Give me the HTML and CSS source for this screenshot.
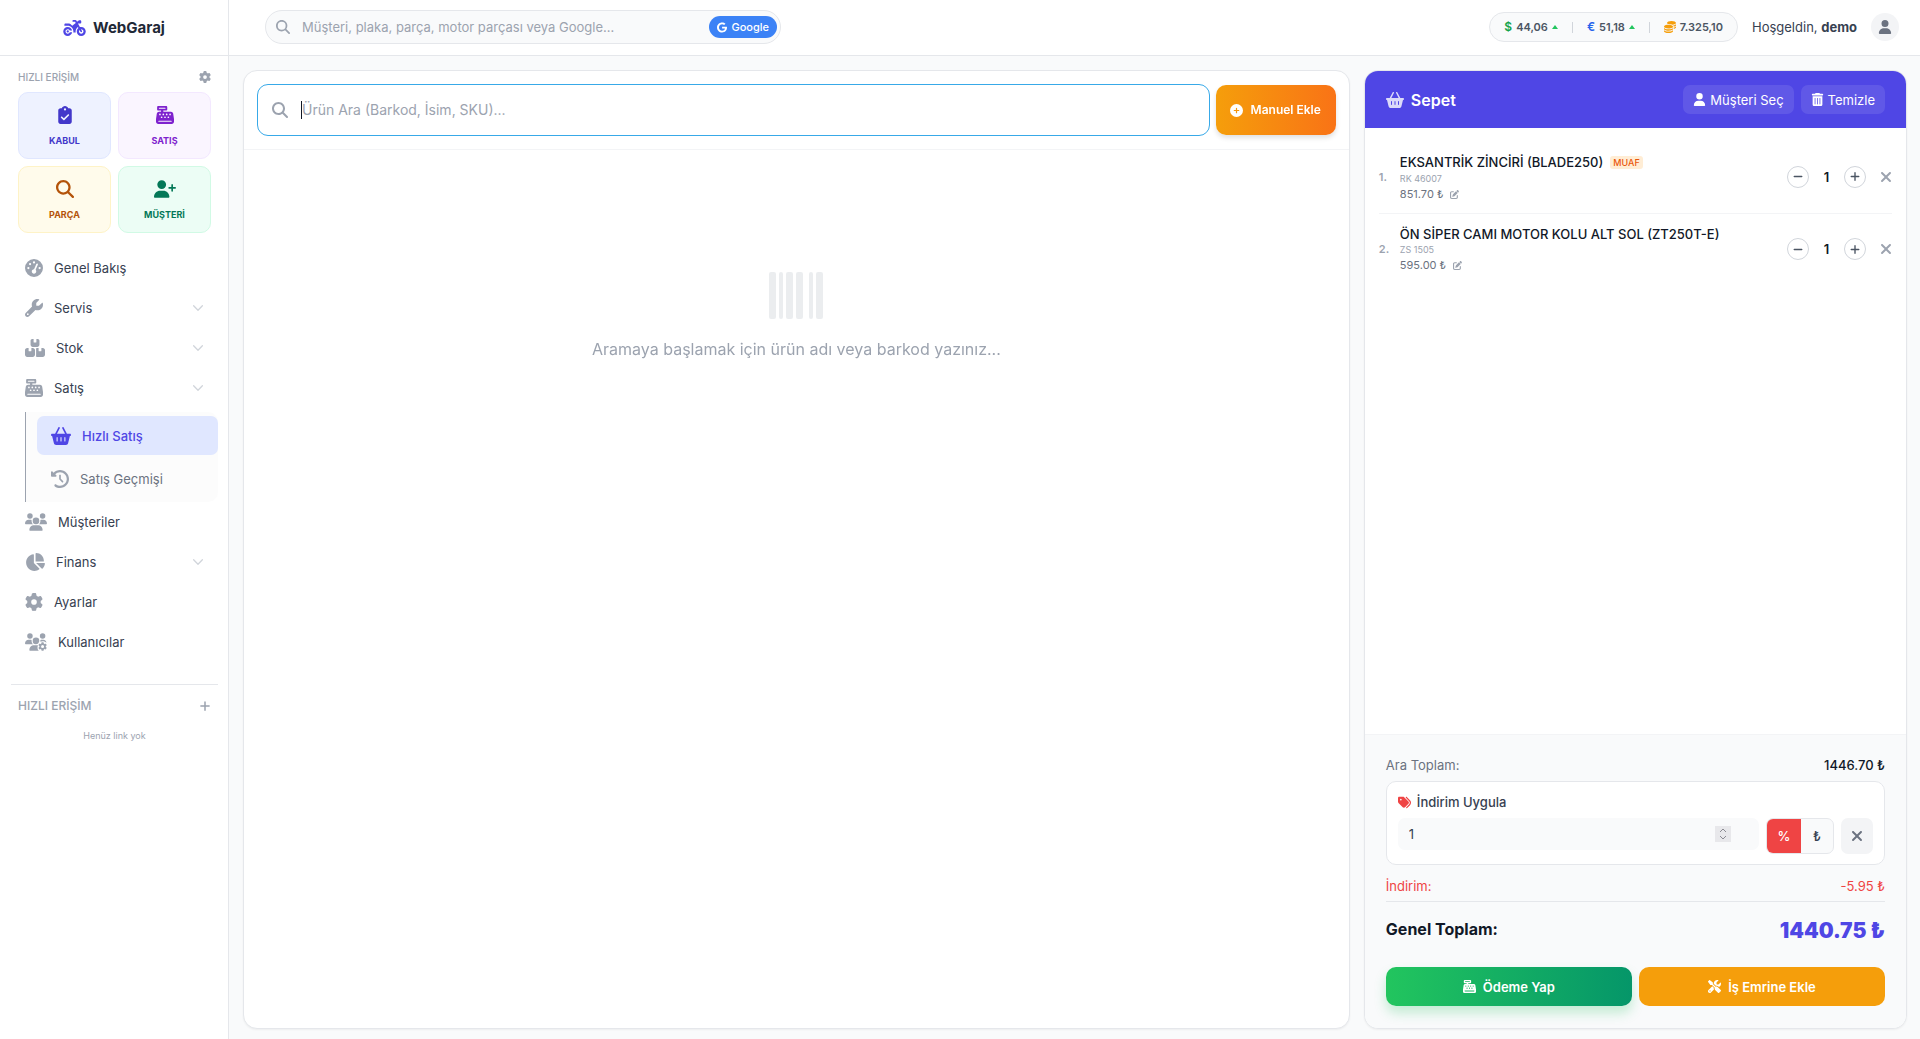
FILE: index.html
```html
<!DOCTYPE html>
<html lang="tr">
<head>
    <meta charset="UTF-8">
    <meta name="viewport" content="width=device-width, initial-scale=1.0">
    <title>WebGaraj - Hızlı Satış</title>
    <link rel="stylesheet" href="styles.css">
</head>
<body>
    <!-- İkonlar -->
    <svg class="sprite" aria-hidden="true">
        <symbol id="i-search" viewBox="0 0 512 512"><path d="M416 208c0 45.9-14.9 88.3-40 122.7L502.6 457.4c12.5 12.5 12.5 32.8 0 45.3s-32.8 12.5-45.3 0L330.7 376c-34.4 25.2-76.8 40-122.7 40C93.1 416 0 322.9 0 208S93.1 0 208 0S416 93.1 416 208zM208 352a144 144 0 1 0 0-288 144 144 0 1 0 0 288z"/></symbol>
        <symbol id="i-gear" viewBox="0 0 512 512"><path d="M495.9 166.6c3.2 8.7 .5 18.4-6.4 24.6l-43.3 39.4c1.1 8.3 1.7 16.8 1.7 25.4s-.6 17.1-1.7 25.4l43.3 39.4c6.9 6.2 9.6 15.9 6.4 24.6c-4.4 11.9-9.7 23.3-15.8 34.3l-4.7 8.1c-6.6 11-14 21.4-22.1 31.2c-5.9 7.2-15.7 9.6-24.5 6.8l-55.7-17.7c-13.4 10.3-28.2 18.9-44 25.4l-12.5 57.1c-2 9.1-9 16.3-18.2 17.8c-13.8 2.3-28 3.5-42.5 3.5s-28.7-1.2-42.5-3.5c-9.2-1.5-16.2-8.7-18.2-17.8l-12.5-57.1c-15.8-6.5-30.6-15.1-44-25.4L83.1 425.9c-8.8 2.8-18.6 .3-24.5-6.8c-8.1-9.8-15.5-20.2-22.1-31.2l-4.7-8.1c-6.1-11-11.4-22.4-15.8-34.3c-3.2-8.7-.5-18.4 6.4-24.6l43.3-39.4C64.6 273.1 64 264.6 64 256s.6-17.1 1.7-25.4L22.4 191.2c-6.9-6.2-9.6-15.9-6.4-24.6c4.4-11.9 9.7-23.3 15.8-34.3l4.7-8.1c6.6-11 14-21.4 22.1-31.2c5.9-7.2 15.7-9.6 24.5-6.8l55.7 17.7c13.4-10.3 28.2-18.9 44-25.4l12.5-57.1c2-9.1 9-16.3 18.2-17.8C227.3 1.2 241.5 0 256 0s28.7 1.2 42.5 3.5c9.2 1.5 16.2 8.7 18.2 17.8l12.5 57.1c15.8 6.5 30.6 15.1 44 25.4l55.7-17.7c8.8-2.8 18.6-.3 24.5 6.8c8.1 9.8 15.5 20.2 22.1 31.2l4.7 8.1c6.1 11 11.4 22.4 15.8 34.3zM256 336a80 80 0 1 0 0-160 80 80 0 1 0 0 160z"/></symbol>
        <symbol id="i-user" viewBox="0 0 448 512"><path d="M224 256A128 128 0 1 0 224 0a128 128 0 1 0 0 256zm-45.7 48C79.8 304 0 383.8 0 482.3C0 498.7 13.3 512 29.7 512H418.3c16.4 0 29.7-13.3 29.7-29.7C448 383.8 368.2 304 269.7 304H178.3z"/></symbol>
        <symbol id="i-user-plus" viewBox="0 0 640 512"><path d="M96 128a128 128 0 1 1 256 0A128 128 0 1 1 96 128zM0 482.3C0 383.8 79.8 304 178.3 304h91.4C368.2 304 448 383.8 448 482.3c0 16.4-13.3 29.7-29.7 29.7H29.7C13.3 512 0 498.7 0 482.3zM504 312V248H440c-13.3 0-24-10.7-24-24s10.7-24 24-24h64V136c0-13.3 10.7-24 24-24s24 10.7 24 24v64h64c13.3 0 24 10.7 24 24s-10.7 24-24 24H552v64c0 13.3-10.7 24-24 24s-24-10.7-24-24z"/></symbol>
        <symbol id="i-wrench" viewBox="0 0 512 512"><path d="M352 320c88.4 0 160-71.6 160-160c0-15.3-2.2-30.1-6.2-44.2c-3.1-10.8-16.4-13.2-24.3-5.3l-76.8 76.8c-3 3-7.1 4.7-11.3 4.7H336c-8.8 0-16-7.2-16-16V118.6c0-4.2 1.7-8.3 4.7-11.3l76.8-76.8c7.9-7.9 5.4-21.2-5.3-24.3C382.1 2.2 367.3 0 352 0C263.6 0 192 71.6 192 160c0 19.1 3.4 37.5 9.5 54.5L19.9 396.1C7.2 408.8 0 426.1 0 444.1C0 481.6 30.4 512 67.9 512c18 0 35.3-7.2 48-19.9L297.5 310.5c17 6.2 35.4 9.5 54.5 9.5zM80 408a24 24 0 1 1 0 48 24 24 0 1 1 0-48z"/></symbol>
        <symbol id="i-gauge" viewBox="0 0 512 512"><path d="M0 256a256 256 0 1 1 512 0A256 256 0 1 1 0 256zM288 96a32 32 0 1 0 -64 0 32 32 0 1 0 64 0zM256 416c35.3 0 64-28.7 64-64c0-17.4-6.9-33.1-18.1-44.6L366 161.7c5.3-12.1-.2-26.3-12.3-31.6s-26.3 .2-31.6 12.3L257.9 288c-.6 0-1.3 0-1.9 0c-35.3 0-64 28.7-64 64s28.7 64 64 64zM176 144a32 32 0 1 0 -64 0 32 32 0 1 0 64 0zM96 288a32 32 0 1 0 0-64 32 32 0 1 0 0 64zm352-32a32 32 0 1 0 -64 0 32 32 0 1 0 64 0z"/></symbol>
        <symbol id="i-boxes" viewBox="0 0 576 512"><path d="M248 0H208c-26.5 0-48 21.5-48 48V160c0 35.3 28.7 64 64 64H352c35.3 0 64-28.7 64-64V48c0-26.5-21.5-48-48-48H328V80c0 8.8-7.2 16-16 16H264c-8.8 0-16-7.2-16-16V0zM64 256c-35.3 0-64 28.7-64 64V448c0 35.3 28.7 64 64 64H224c35.3 0 64-28.7 64-64V320c0-35.3-28.7-64-64-64H184v80c0 8.8-7.2 16-16 16H120c-8.8 0-16-7.2-16-16V256H64zM352 512H512c35.3 0 64-28.7 64-64V320c0-35.3-28.7-64-64-64H472v80c0 8.8-7.2 16-16 16H408c-8.8 0-16-7.2-16-16V256H352c-15 0-28.8 5.1-39.7 13.8c4.9 10.4 7.7 22 7.7 34.2V464c0 12.2-2.8 23.8-7.7 34.2C323.2 506.9 337 512 352 512z"/></symbol>
        <symbol id="i-register" viewBox="0 0 512 512"><path d="M64 0C46.3 0 32 14.3 32 32V96c0 17.7 14.3 32 32 32h80v32H87c-31.6 0-58.5 23.1-63.3 54.4L1.1 364.1C.4 368.8 0 373.6 0 378.4V448c0 35.3 28.7 64 64 64H448c35.3 0 64-28.7 64-64V378.4c0-4.8-.4-9.6-1.1-14.4L488.2 214.4C483.5 183.1 456.6 160 425 160H208V128h80c17.7 0 32-14.3 32-32V32c0-17.7-14.3-32-32-32H64zM96 48H256c8.8 0 16 7.2 16 16s-7.2 16-16 16H96c-8.8 0-16-7.2-16-16s7.2-16 16-16zM64 432c0-8.8 7.2-16 16-16H432c8.8 0 16 7.2 16 16s-7.2 16-16 16H80c-8.8 0-16-7.2-16-16zm48-168a24 24 0 1 1 0-48 24 24 0 1 1 0 48zm120-24a24 24 0 1 1 -48 0 24 24 0 1 1 48 0zM160 344a24 24 0 1 1 0-48 24 24 0 1 1 0 48zM328 240a24 24 0 1 1 -48 0 24 24 0 1 1 48 0zM256 344a24 24 0 1 1 0-48 24 24 0 1 1 0 48zM424 240a24 24 0 1 1 -48 0 24 24 0 1 1 48 0zM352 344a24 24 0 1 1 0-48 24 24 0 1 1 0 48z"/></symbol>
        <symbol id="i-basket" viewBox="0 0 576 512"><path d="M253.3 35.1c6.1-11.8 1.5-26.3-10.2-32.4s-26.3-1.5-32.4 10.2L117.6 192H32c-17.7 0-32 14.3-32 32s14.3 32 32 32L83.9 463.5C91 492 116.6 512 146 512H430c29.4 0 55-20 62.1-48.5L544 256c17.7 0 32-14.3 32-32s-14.3-32-32-32H458.4L365.3 12.9C359.2 1.2 344.7-3.4 332.9 2.7s-16.3 20.6-10.2 32.4L404.3 192H171.7L253.3 35.1zM192 304v96c0 8.8-7.2 16-16 16s-16-7.2-16-16V304c0-8.8 7.2-16 16-16s16 7.2 16 16zm96-16c8.8 0 16 7.2 16 16v96c0 8.8-7.2 16-16 16s-16-7.2-16-16V304c0-8.8 7.2-16 16-16zm128 16v96c0 8.8-7.2 16-16 16s-16-7.2-16-16V304c0-8.8 7.2-16 16-16s16 7.2 16 16z"/></symbol>
        <symbol id="i-history" viewBox="0 0 512 512"><path d="M75 75L41 41C25.9 25.9 0 36.6 0 57.9V168c0 13.3 10.7 24 24 24H134.1c21.4 0 32.1-25.9 17-41l-30.8-30.8C155 85.5 203 64 256 64c106 0 192 86 192 192s-86 192-192 192c-40.8 0-78.6-12.7-109.7-34.4c-14.5-10.1-34.4-6.6-44.6 7.9s-6.6 34.4 7.9 44.6C151.2 495 201.7 512 256 512c141.4 0 256-114.6 256-256S397.4 0 256 0C185.3 0 121.3 28.7 75 75zm181 53c-13.3 0-24 10.7-24 24V256c0 6.4 2.5 12.5 7 17l72 72c9.4 9.4 24.6 9.4 33.9 0s9.4-24.6 0-33.9l-65-65V152c0-13.3-10.7-24-24-24z"/></symbol>
        <symbol id="i-users" viewBox="0 0 640 512"><path d="M144 0a80 80 0 1 1 0 160A80 80 0 1 1 144 0zM512 0a80 80 0 1 1 0 160A80 80 0 1 1 512 0zM0 298.7C0 239.8 47.8 192 106.7 192h42.7c15.9 0 31 3.5 44.6 9.7c-1.3 7.2-1.9 14.7-1.9 22.3c0 38.2 16.8 72.5 43.3 96c-.2 0-.4 0-.7 0H21.3C9.6 320 0 310.4 0 298.7zM405.3 320c-.2 0-.4 0-.7 0c26.6-23.5 43.3-57.8 43.3-96c0-7.6-.7-15-1.9-22.3c13.6-6.3 28.7-9.7 44.6-9.7h42.7C592.2 192 640 239.8 640 298.7c0 11.8-9.6 21.3-21.3 21.3H405.3zM224 224a96 96 0 1 1 192 0 96 96 0 1 1 -192 0zM128 485.3C128 411.7 187.7 352 261.3 352H378.7C452.3 352 512 411.7 512 485.3c0 14.7-11.9 26.7-26.7 26.7H154.7c-14.7 0-26.7-11.9-26.7-26.7z"/></symbol>
        <symbol id="i-users-gear" viewBox="0 0 640 512">
            <path d="M144 160A80 80 0 1 0 144 0a80 80 0 1 0 0 160zM512 160A80 80 0 1 0 512 0a80 80 0 1 0 0 160zM0 298.7C0 310.4 9.6 320 21.3 320H234.7c.2 0 .4 0 .7 0c-26.6-23.5-43.3-57.8-43.3-96c0-7.6 .7-15 1.9-22.3c-13.6-6.3-28.7-9.7-44.6-9.7H106.7C47.8 192 0 239.8 0 298.7zM320 320c24 0 45.9-8.8 62.7-23.3c2.5-3.7 5.2-7.3 8-10.7c16-18.7 22-40 25.3-62A96 96 0 1 0 320 320zM261.3 352C187.7 352 128 411.7 128 485.3c0 14.7 11.9 26.7 26.7 26.7H400c-22-25-36-52-36-88c0-26 4-48 14-72H261.3zM446 201.7c1.2 7.3 2 14.7 2 22.3c0 10-1 19-3 28c20-12 44-20 69-20c46 0 84 18 112 46C616 228 578 192 533.3 192H490.7c-16 0-31 3.5-44.7 9.7z"/>
            <g transform="translate(386 262) scale(.49)"><path d="M495.9 166.6c3.2 8.7 .5 18.4-6.4 24.6l-43.3 39.4c1.1 8.3 1.7 16.8 1.7 25.4s-.6 17.1-1.7 25.4l43.3 39.4c6.9 6.2 9.6 15.9 6.4 24.6c-4.4 11.9-9.7 23.3-15.8 34.3l-4.7 8.1c-6.6 11-14 21.4-22.1 31.2c-5.9 7.2-15.7 9.6-24.5 6.8l-55.7-17.7c-13.4 10.3-28.2 18.9-44 25.4l-12.5 57.1c-2 9.1-9 16.3-18.2 17.8c-13.8 2.3-28 3.5-42.5 3.5s-28.7-1.2-42.5-3.5c-9.2-1.5-16.2-8.7-18.2-17.8l-12.5-57.1c-15.8-6.5-30.6-15.1-44-25.4L83.1 425.9c-8.8 2.8-18.6 .3-24.5-6.8c-8.1-9.8-15.5-20.2-22.1-31.2l-4.7-8.1c-6.1-11-11.4-22.4-15.8-34.3c-3.2-8.7-.5-18.4 6.4-24.6l43.3-39.4C64.6 273.1 64 264.6 64 256s.6-17.1 1.7-25.4L22.4 191.2c-6.9-6.2-9.6-15.9-6.4-24.6c4.4-11.9 9.7-23.3 15.8-34.3l4.7-8.1c6.6-11 14-21.4 22.1-31.2c5.9-7.2 15.7-9.6 24.5-6.8l55.7 17.7c13.4-10.3 28.2-18.9 44-25.4l12.5-57.1c2-9.1 9-16.3 18.2-17.8C227.3 1.2 241.5 0 256 0s28.7 1.2 42.5 3.5c9.2 1.5 16.2 8.7 18.2 17.8l12.5 57.1c15.8 6.5 30.6 15.1 44 25.4l55.7-17.7c8.8-2.8 18.6-.3 24.5 6.8c8.1 9.8 15.5 20.2 22.1 31.2l4.7 8.1c6.1 11 11.4 22.4 15.8 34.3zM256 346a90 90 0 1 0 0-180 90 90 0 1 0 0 180z"/></g>
        </symbol>
        <symbol id="i-pie" viewBox="0 0 576 512"><path d="M304 240V16.6c0-9 7-16.6 16-16.6C443.7 0 544 100.3 544 224c0 9-7.6 16-16.6 16H304zM32 272C32 150.7 122.1 50.3 239 34.3c9.2-1.3 17 6.1 17 15.4V288L412.5 444.5c6.7 6.7 6.2 17.7-1.5 23.1C371.8 495.6 323.8 512 272 512C139.5 512 32 404.6 32 272zm526.4 16c9.3 0 16.6 7.8 15.4 17c-7.7 55.9-34.6 105.6-73.9 142.3c-6 5.6-15.4 5.2-21.2-.7L320 288H558.4z"/></symbol>
        <symbol id="i-tags" viewBox="0 0 512 512"><path d="M345 39.1L472.8 168.4c52.4 53 52.4 138.2 0 191.2L360.8 472.9c-9.3 9.4-24.5 9.5-33.9 .2s-9.5-24.5-.2-33.9L438.6 325.9c33.9-34.3 33.9-89.4 0-123.7L310.9 72.9c-9.3-9.4-9.2-24.6 .2-33.9s24.6-9.2 33.9 .2zM0 229.5V80C0 53.5 21.5 32 48 32H197.5c17 0 33.3 6.7 45.3 18.7l168 168c25 25 25 65.5 0 90.5L277.3 442.7c-25 25-65.5 25-90.5 0l-168-168C6.7 262.7 0 246.5 0 229.5zM144 144a32 32 0 1 0 -64 0 32 32 0 1 0 64 0z"/></symbol>
        <symbol id="i-trash" viewBox="0 0 448 512"><path d="M135.2 17.7C140.6 6.8 151.7 0 163.8 0H284.2c12.1 0 23.2 6.8 28.6 17.7L320 32h96c17.7 0 32 14.3 32 32s-14.3 32-32 32H32C14.3 96 0 81.7 0 64S14.3 32 32 32h96l7.2-14.3zM32 128H416V448c0 35.3-28.7 64-64 64H96c-35.3 0-64-28.7-64-64V128zm96 64c-8.8 0-16 7.2-16 16V432c0 8.8 7.2 16 16 16s16-7.2 16-16V208c0-8.8-7.2-16-16-16zm96 0c-8.8 0-16 7.2-16 16V432c0 8.8 7.2 16 16 16s16-7.2 16-16V208c0-8.8-7.2-16-16-16zm96 0c-8.8 0-16 7.2-16 16V432c0 8.8 7.2 16 16 16s16-7.2 16-16V208c0-8.8-7.2-16-16-16z"/></symbol>
        <symbol id="i-circle-plus" viewBox="0 0 512 512"><path d="M256 512A256 256 0 1 0 256 0a256 256 0 1 0 0 512zM232 344V280H168c-13.3 0-24-10.7-24-24s10.7-24 24-24h64V168c0-13.3 10.7-24 24-24s24 10.7 24 24v64h64c13.3 0 24 10.7 24 24s-10.7 24-24 24H280v64c0 13.3-10.7 24-24 24s-24-10.7-24-24z"/></symbol>
        <symbol id="i-xmark" viewBox="0 0 384 512"><path d="M342.6 150.6c12.5-12.5 12.5-32.8 0-45.3s-32.8-12.5-45.3 0L192 210.7 86.6 105.4c-12.5-12.5-32.8-12.5-45.3 0s-12.5 32.8 0 45.3L146.7 256 41.4 361.4c-12.5 12.5-12.5 32.8 0 45.3s32.8 12.5 45.3 0L192 301.3 297.4 406.6c12.5 12.5 32.8 12.5 45.3 0s12.5-32.8 0-45.3L237.3 256 342.6 150.6z"/></symbol>
        <symbol id="i-plus" viewBox="0 0 448 512"><path d="M256 80c0-17.7-14.3-32-32-32s-32 14.3-32 32V224H48c-17.7 0-32 14.3-32 32s14.3 32 32 32H192V432c0 17.7 14.3 32 32 32s32-14.3 32-32V288H400c17.7 0 32-14.3 32-32s-14.3-32-32-32H256V80z"/></symbol>
        <symbol id="i-minus" viewBox="0 0 448 512"><path d="M432 256c0 17.7-14.3 32-32 32H48c-17.7 0-32-14.3-32-32s14.3-32 32-32H400c17.7 0 32 14.3 32 32z"/></symbol>
        <symbol id="i-chevron" viewBox="0 0 16 16"><path d="M3 5.5l5 5 5-5" fill="none" stroke="currentColor" stroke-width="1.5" stroke-linecap="round" stroke-linejoin="round"/></symbol>
        <symbol id="i-google" viewBox="0 0 488 512"><path d="M488 261.8C488 403.3 391.1 504 248 504 110.8 504 0 393.2 0 256S110.8 8 248 8c66.8 0 123 24.5 166.3 64.9l-67.5 64.9C258.5 52.6 94.3 116.6 94.3 256c0 86.5 69.1 156.6 153.7 156.6 98.2 0 135-70.4 140.8-106.9H248v-85.3h236.1c2.3 12.7 3.9 24.9 3.9 41.4z"/></symbol>
        <symbol id="i-moto" viewBox="0 0 640 512"><path d="M280 32c-13.3 0-24 10.7-24 24s10.7 24 24 24h57.7l16.4 30.3L256 192l-45.3-45.3c-12-12-28.3-18.7-45.3-18.7H64c-17.7 0-32 14.3-32 32v32h96c88.4 0 160 71.6 160 160c0 11-1.1 21.7-3.2 32h70.4c-2.1-10.3-3.2-21-3.2-32c0-52.2 25-98.6 63.7-127.8l15.4 28.6C402.4 276.3 384 312 384 352c0 70.7 57.3 128 128 128s128-57.3 128-128s-57.3-128-128-128c-13.5 0-26.5 2.1-38.7 6L418.2 128H480c17.7 0 32-14.3 32-32V64c0-17.7-14.3-32-32-32H459.6c-7.5 0-14.7 2.6-20.5 7.4L391.7 78.9l-14-26c-7-12.9-20.5-21-35.2-21H280zM462.7 311.2l28.2 52.2c6.3 11.7 20.9 16 32.5 9.7s16-20.9 9.7-32.5l-28.2-52.2c2.3-.3 4.7-.4 7.1-.4c35.3 0 64 28.7 64 64s-28.7 64-64 64s-64-28.7-64-64c0-15.5 5.5-29.7 14.7-40.8zM187.3 376c-9.5 23.5-32.5 40-59.3 40c-35.3 0-64-28.7-64-64s28.7-64 64-64c26.9 0 49.9 16.5 59.3 40h66.4C242.5 268.8 190.5 224 128 224C57.3 224 0 281.3 0 352s57.3 128 128 128c62.5 0 114.5-44.8 125.8-104H187.3zM128 384a32 32 0 1 0 0-64 32 32 0 1 0 0 64z"/></symbol>
        <symbol id="i-coins" viewBox="0 0 512 512"><path d="M512 80c0 18-14.3 34.6-38.4 48c-29.1 16.1-72.5 27.5-122.3 30.9c-3.7-1.8-7.4-3.5-11.3-5C300.6 137.4 248.2 128 192 128c-8.3 0-16.4 .2-24.5 .6l-1.1-.6C142.3 114.6 128 98 128 80c0-44.2 86-80 192-80S512 35.8 512 80zM160.7 161.1c10.2-.7 20.7-1.1 31.3-1.1c62.2 0 117.4 12.3 152.5 31.4C369.3 204.9 384 221.7 384 240c0 4-.7 7.9-2.1 11.7c-4.6 13.2-17 25.3-35 35.5c-.1 .1-.3 .1-.4 .2c-.3 .2-.6 .3-.9 .5c-35 19.4-90.8 32-153.6 32c-59.6 0-112.9-11.3-148.2-29.1c-1.9-.9-3.7-1.9-5.5-2.9C14.3 274.6 0 258 0 240c0-34.8 53.4-64.5 128-75.4c10.5-1.5 21.4-2.7 32.7-3.5zM416 240c0-21.9-10.6-39.9-24.1-53.4c28.3-4.4 54.2-11.4 76.2-20.5c16.3-6.8 31.5-15.2 43.9-25.5V176c0 19.3-16.5 37.1-43.8 50.9c-14.6 7.4-32.4 13.7-52.4 18.5c.1-1.8 .2-3.5 .2-5.3zm-32 96c0 18-14.3 34.6-38.4 48c-1.8 1-3.6 1.9-5.5 2.9C304.9 404.7 251.6 416 192 416c-62.8 0-118.6-12.6-153.6-32C14.3 370.6 0 354 0 336V300.6c12.5 10.3 27.6 18.7 43.9 25.5C83.4 342.6 135.8 352 192 352s108.6-9.4 148.1-25.9c7.8-3.2 15.3-6.9 22.4-10.9c6.1-3.4 11.8-7.2 17.2-11.2c1.5-1.1 2.9-2.3 4.3-3.4V336zm32 0V278.1c19-4.2 36.5-9.5 52.1-16c16.3-6.8 31.5-15.2 43.9-25.5V272c0 10.5-5 21-14.9 30.9c-16.3 16.3-45 29.7-81.3 38.4c.1-1.7 .2-3.5 .2-5.3zM192 448c56.2 0 108.6-9.4 148.1-25.9c16.3-6.8 31.5-15.2 43.9-25.5V432c0 44.2-86 80-192 80S0 476.2 0 432V396.6c12.5 10.3 27.6 18.7 43.9 25.5C83.4 438.6 135.8 448 192 448z"/></symbol>
        <symbol id="i-tools" viewBox="0 0 512 512"><path d="M78.6 5C69.1-2.4 55.6-1.5 47 7L7 47c-8.5 8.5-9.4 22-2.1 31.6l80 104c4.5 5.9 11.6 9.4 19 9.4h54.1l109 109c-14.7 29-10 65.4 14.3 89.6l112 112c12.5 12.5 32.8 12.5 45.3 0l64-64c12.5-12.5 12.5-32.8 0-45.3l-112-112c-24.2-24.2-60.6-29-89.6-14.3l-109-109V104c0-7.5-3.5-14.5-9.4-19L78.6 5zM19.9 396.1C7.2 408.8 0 426.1 0 444.1C0 481.6 30.4 512 67.9 512c18 0 35.3-7.2 48-19.9L233.7 374.3c-7.8-20.9-9-43.6-3.6-65.1l-61.7-61.7L19.9 396.1zM512 144c0-10.5-1.1-20.7-3.2-30.5c-2.4-11.2-16.1-14.1-24.2-6l-63.9 63.9c-3 3-7.1 4.7-11.3 4.7H352c-8.8 0-16-7.2-16-16V102.6c0-4.2 1.7-8.3 4.7-11.3l63.9-63.9c8.1-8.1 5.2-21.8-6-24.2C388.7 1.1 378.5 0 368 0C288.5 0 224 64.5 224 144l0 .8 85.3 85.3c36-9.1 75.8 .5 104 28.7L429 274.5c49-23 83-72.8 83-130.5zM56 432a24 24 0 1 1 48 0 24 24 0 1 1 -48 0z"/></symbol>
        <symbol id="i-clipboard" viewBox="0 0 384 512"><path d="M192 0c-41.8 0-77.4 26.7-90.5 64H64C28.7 64 0 92.7 0 128V448c0 35.3 28.7 64 64 64H320c35.3 0 64-28.7 64-64V128c0-35.3-28.7-64-64-64H282.5C269.4 26.7 233.8 0 192 0zm0 64a32 32 0 1 1 0 64 32 32 0 1 1 0-64zM305 273L177 401c-9.4 9.4-24.6 9.4-33.9 0L79 337c-9.4-9.4-9.4-24.6 0-33.9s24.6-9.4 33.9 0l47 47L271 239c9.4-9.4 24.6-9.4 33.9 0s9.4 24.6 0 33.9z"/></symbol>
        <symbol id="i-edit" viewBox="0 0 512 512"><path d="M471.6 21.7c-21.9-21.9-57.3-21.9-79.2 0L362.3 51.7l97.9 97.9 30.1-30.1c21.9-21.9 21.9-57.3 0-79.2L471.6 21.7zm-299.2 220c-6.1 6.1-10.8 13.6-13.5 21.9l-29.6 88.8c-2.9 8.6-.6 18.1 5.8 24.6s15.9 8.7 24.6 5.8l88.8-29.6c8.2-2.7 15.7-7.4 21.9-13.5L437.7 172.3 339.7 74.3 172.4 241.7zM96 64C43 64 0 107 0 160V416c0 53 43 96 96 96H352c53 0 96-43 96-96V320c0-17.7-14.3-32-32-32s-32 14.3-32 32v96c0 17.7-14.3 32-32 32H96c-17.7 0-32-14.3-32-32V160c0-17.7 14.3-32 32-32h96c17.7 0 32-14.3 32-32s-14.3-32-32-32H96z"/></symbol>
        <symbol id="i-up" viewBox="0 0 12 8"><path d="M6 0L12 8H0z"/></symbol>
        <symbol id="i-barcode" viewBox="0 0 54 48">
            <rect x="0" y="0" width="7" height="47" rx="2"/>
            <rect x="10" y="0" width="4" height="47" rx="2"/>
            <rect x="17" y="0" width="7" height="47" rx="2"/>
            <rect x="27" y="0" width="7" height="47" rx="2"/>
            <rect x="40" y="0" width="4" height="47" rx="2"/>
            <rect x="47" y="0" width="7" height="47" rx="2"/>
        </symbol>
    </svg>

    <aside class="sidebar">
        <a class="logo" href="#"><svg class="icon icon-moto"><use href="#i-moto"/></svg>WebGaraj</a>

        <section class="quick">
            <div class="quick-head">
                <h2>HIZLI ERİŞİM</h2>
                <button class="plain-btn" aria-label="Hızlı erişim ayarları"><svg class="icon icon-12"><use href="#i-gear"/></svg></button>
            </div>
            <div class="tiles">
                <a class="tile tile-blue" href="#"><svg class="icon icon-18"><use href="#i-clipboard"/></svg>KABUL</a>
                <a class="tile tile-purple" href="#"><svg class="icon icon-18"><use href="#i-register"/></svg>SATIŞ</a>
                <a class="tile tile-yellow" href="#"><svg class="icon icon-18"><use href="#i-search"/></svg>PARÇA</a>
                <a class="tile tile-green" href="#"><svg class="icon icon-wide"><use href="#i-user-plus"/></svg>MÜŞTERİ</a>
            </div>
        </section>

        <nav class="menu">
            <a class="menu-link" href="#"><svg class="icon icon-18"><use href="#i-gauge"/></svg>Genel Bakış</a>
            <a class="menu-link" href="#"><svg class="icon icon-18"><use href="#i-wrench"/></svg>Servis<svg class="icon chevron"><use href="#i-chevron"/></svg></a>
            <a class="menu-link" href="#"><svg class="icon icon-20"><use href="#i-boxes"/></svg>Stok<svg class="icon chevron"><use href="#i-chevron"/></svg></a>
            <a class="menu-link" href="#"><svg class="icon icon-18"><use href="#i-register"/></svg>Satış<svg class="icon chevron"><use href="#i-chevron"/></svg></a>
            <div class="submenu">
                <a class="submenu-link active" href="#"><svg class="icon icon-20"><use href="#i-basket"/></svg>Hızlı Satış</a>
                <a class="submenu-link" href="#"><svg class="icon icon-18"><use href="#i-history"/></svg>Satış Geçmişi</a>
            </div>
            <a class="menu-link" href="#"><svg class="icon icon-wide"><use href="#i-users"/></svg>Müşteriler</a>
            <a class="menu-link" href="#"><svg class="icon icon-20"><use href="#i-pie"/></svg>Finans<svg class="icon chevron"><use href="#i-chevron"/></svg></a>
            <a class="menu-link" href="#"><svg class="icon icon-18"><use href="#i-gear"/></svg>Ayarlar</a>
            <a class="menu-link" href="#"><svg class="icon icon-wide"><use href="#i-users-gear"/></svg>Kullanıcılar</a>
        </nav>

        <section class="links">
            <div class="links-head">
                <h2>HIZLI ERİŞİM</h2>
                <button class="plain-btn" aria-label="Link ekle"><svg class="icon icon-12"><use href="#i-plus"/></svg></button>
            </div>
            <p>Henüz link yok</p>
        </section>
    </aside>

    <div class="page">
        <header class="topbar">
            <form class="global-search" onsubmit="return false">
                <svg class="icon icon-14"><use href="#i-search"/></svg>
                <input type="text" aria-label="Genel arama" placeholder="Müşteri, plaka, parça, motor parçası veya Google...">
                <button class="google-btn"><svg class="icon icon-google"><use href="#i-google"/></svg>Google</button>
            </form>
            <div class="topbar-right">
                <div class="rates">
                    <span class="rate"><b class="usd">$</b>44,06<svg class="icon icon-up"><use href="#i-up"/></svg></span>
                    <span class="rate"><b class="eur">€</b>51,18<svg class="icon icon-up"><use href="#i-up"/></svg></span>
                    <span class="rate"><svg class="icon icon-12 gold"><use href="#i-coins"/></svg>7.325,10</span>
                </div>
                <span class="welcome">Hoşgeldin, <strong>demo</strong></span>
                <button class="avatar" aria-label="Profil"><svg class="icon icon-14"><use href="#i-user"/></svg></button>
            </div>
        </header>

        <main class="content">
            <section class="panel products">
                <div class="products-head">
                    <label class="product-search">
                        <svg class="icon icon-16"><use href="#i-search"/></svg>
                        <input type="text" id="productSearch" aria-label="Ürün ara" placeholder="Ürün Ara (Barkod, İsim, SKU)..." autofocus>
                    </label>
                    <button class="manual-btn"><svg class="icon icon-13"><use href="#i-circle-plus"/></svg>Manuel Ekle</button>
                </div>
                <div class="empty">
                    <svg class="icon icon-barcode"><use href="#i-barcode"/></svg>
                    <p>Aramaya başlamak için ürün adı veya barkod yazınız...</p>
                </div>
            </section>

            <section class="panel cart">
                <div class="cart-head">
                    <h1><svg class="icon icon-basket"><use href="#i-basket"/></svg>Sepet</h1>
                    <div class="cart-actions">
                        <button><svg class="icon icon-13"><use href="#i-user"/></svg>Müşteri Seç</button>
                        <button><svg class="icon icon-13"><use href="#i-trash"/></svg>Temizle</button>
                    </div>
                </div>

                <div class="cart-list">
                    <article class="cart-item">
                        <span class="item-no">1.</span>
                        <div class="item-info">
                            <h3>EKSANTRİK ZİNCİRİ (BLADE250)<span class="badge">MUAF</span></h3>
                            <span class="sku">RK 46007</span>
                            <span class="price">851.70 ₺<button class="plain-btn" aria-label="Fiyatı düzenle"><svg class="icon icon-edit"><use href="#i-edit"/></svg></button></span>
                        </div>
                        <div class="item-qty">
                            <button class="qty-btn" aria-label="Azalt"><svg class="icon icon-10"><use href="#i-minus"/></svg></button>
                            <span class="qty">1</span>
                            <button class="qty-btn" aria-label="Arttır"><svg class="icon icon-10"><use href="#i-plus"/></svg></button>
                        </div>
                        <button class="plain-btn" aria-label="Sil"><svg class="icon icon-x"><use href="#i-xmark"/></svg></button>
                    </article>
                    <article class="cart-item">
                        <span class="item-no">2.</span>
                        <div class="item-info">
                            <h3>ÖN SİPER CAMI MOTOR KOLU ALT SOL (ZT250T-E)</h3>
                            <span class="sku">ZS 1505</span>
                            <span class="price">595.00 ₺<button class="plain-btn" aria-label="Fiyatı düzenle"><svg class="icon icon-edit"><use href="#i-edit"/></svg></button></span>
                        </div>
                        <div class="item-qty">
                            <button class="qty-btn" aria-label="Azalt"><svg class="icon icon-10"><use href="#i-minus"/></svg></button>
                            <span class="qty">1</span>
                            <button class="qty-btn" aria-label="Arttır"><svg class="icon icon-10"><use href="#i-plus"/></svg></button>
                        </div>
                        <button class="plain-btn" aria-label="Sil"><svg class="icon icon-x"><use href="#i-xmark"/></svg></button>
                    </article>
                </div>

                <div class="summary">
                    <div class="sum-row"><span>Ara Toplam:</span><strong>1446.70 ₺</strong></div>
                    <div class="discount">
                        <label for="discountValue"><svg class="icon icon-13"><use href="#i-tags"/></svg>İndirim Uygula</label>
                        <div class="discount-row">
                            <input type="number" id="discountValue" value="1">
                            <div class="discount-type">
                                <button class="selected">%</button>
                                <button>₺</button>
                            </div>
                            <button class="discount-clear" aria-label="İndirimi kaldır"><svg class="icon icon-16"><use href="#i-xmark"/></svg></button>
                        </div>
                    </div>
                    <div class="sum-row minus"><span>İndirim:</span><span>-5.95 ₺</span></div>
                    <div class="total"><span>Genel Toplam:</span><strong>1440.75 ₺</strong></div>
                    <div class="pay-actions">
                        <button class="pay"><svg class="icon icon-13"><use href="#i-register"/></svg>Ödeme Yap</button>
                        <button class="work-order"><svg class="icon icon-13"><use href="#i-tools"/></svg>İş Emrine Ekle</button>
                    </div>
                </div>
            </section>
        </main>
    </div>
</body>
</html>
```
FILE: styles.css
```css
* {
    box-sizing: border-box;
}

body {
    margin: 0;
    display: flex;
    min-height: 100vh;
    background-color: #f9fafb;
    color: #111827;
    font-family: Inter, "Noto Sans", sans-serif;
    font-size: 13px;
    line-height: 18px;
}

h1, h2, h3, p {
    margin: 0;
}

a {
    color: inherit;
    text-decoration: none;
}

button, input {
    font: inherit;
    color: inherit;
}

button {
    display: flex;
    align-items: center;
    justify-content: center;
    padding: 0;
    border: none;
    background: none;
    cursor: pointer;
}

input {
    min-width: 0;
    border: none;
    outline: none;
    background: none;
    padding: 0;
}

input::placeholder {
    color: #9ca3af;
    opacity: 1;
}

/* İkonlar */
.sprite {
    display: none;
}

.icon {
    flex: none;
    fill: currentColor;
}

.icon-10 { width: 10px; height: 11px; }
.icon-12 { width: 12px; height: 12px; }
.icon-13 { width: 13px; height: 13px; }
.icon-14 { width: 14px; height: 14px; }
.icon-16 { width: 16px; height: 16px; }
.icon-18 { width: 18px; height: 18px; }
.icon-20 { width: 20px; height: 18px; }
.icon-wide { width: 22px; height: 18px; }
.icon-moto { width: 23px; height: 18px; color: #4f46e5; }
.icon-google { width: 10px; height: 11px; }
.icon-up { width: 6px; height: 4px; color: #22c55e; }
.icon-barcode { width: 54px; height: 48px; }
.icon-basket { width: 18px; height: 16px; }
.icon-edit { width: 9px; height: 9px; }
.icon-x { width: 12px; height: 16px; }

.plain-btn {
    color: #9ca3af;
}

/* Sol menü */
.sidebar {
    flex: none;
    width: 229px;
    background-color: #fff;
    border-right: 1px solid #e5e7eb;
}

.logo {
    display: flex;
    align-items: center;
    justify-content: center;
    gap: 7px;
    height: 56px;
    border-bottom: 1px solid #e5e7eb;
    color: #1f2937;
    font-size: 15px;
    font-weight: 700;
}

.quick {
    padding: 14px 17px 0 18px;
}

.quick-head, .links-head {
    display: flex;
    align-items: center;
    justify-content: space-between;
    color: #9ca3af;
}

.quick-head {
    height: 14px;
    margin-bottom: 8px;
}

.quick-head h2 {
    font-size: 10px;
    font-weight: 500;
}

.tiles {
    display: grid;
    grid-template-columns: 1fr 1fr;
    gap: 7px;
}

.tile {
    display: flex;
    flex-direction: column;
    align-items: center;
    justify-content: center;
    gap: 10px;
    height: 67px;
    padding-top: 3px;
    border: 1px solid;
    border-radius: 10px;
    font-size: 9px;
    font-weight: 700;
    line-height: 14px;
}

.tile-blue {
    background-color: #eef2ff;
    border-color: #e0e7ff;
    color: #4338ca;
}

.tile-purple {
    background-color: #faf5ff;
    border-color: #f3e8ff;
    color: #7e22ce;
}

.tile-yellow {
    background-color: #fffbeb;
    border-color: #fef3c7;
    color: #b45309;
}

.tile-green {
    background-color: #ecfdf5;
    border-color: #d1fae5;
    color: #047857;
}

.menu {
    padding: 15px 10px 0 11px;
}

.menu-link {
    display: flex;
    align-items: center;
    gap: 11px;
    height: 40px;
    padding: 0 13px 0 14px;
    color: #374151;
}

.menu-link .icon {
    color: #9ca3af;
}

.menu-link .chevron {
    width: 14px;
    height: 14px;
    margin-left: auto;
    color: #d1d5db;
}

.submenu {
    display: flex;
    flex-direction: column;
    gap: 4px;
    margin: 4px 0 0 14px;
    padding: 4px 0 4px 11px;
    border-left: 1px solid #9ca3af;
    border-radius: 0 10px 10px 0;
    background-color: #fcfcfc;
}

.submenu-link {
    display: flex;
    align-items: center;
    gap: 11px;
    height: 39px;
    padding: 0 14px;
    border-radius: 7px;
    color: #6b7280;
}

.submenu-link .icon {
    color: #9ca3af;
}

.submenu-link.active,
.submenu-link.active .icon {
    color: #4f46e5;
}

.submenu-link.active {
    background-color: #e0e7ff;
    font-weight: 500;
}

.links {
    margin: 22px 10px 0 11px;
    padding: 12px 7px;
    border-top: 1px solid #e5e7eb;
}

.links-head h2 {
    font-size: 12px;
    font-weight: 500;
}

.links p {
    margin-top: 12px;
    color: #9ca3af;
    font-size: 9px;
    text-align: center;
}

/* Üst bar */
.page {
    flex: 1;
    min-width: 0;
    display: flex;
    flex-direction: column;
}

.topbar {
    display: flex;
    align-items: center;
    justify-content: space-between;
    height: 56px;
    padding: 0 21px 1px 36px;
    background-color: #fff;
    border-bottom: 1px solid #e5e7eb;
}

.global-search {
    display: flex;
    align-items: center;
    gap: 12px;
    width: 516px;
    height: 34px;
    padding: 0 3px 0 10px;
    border: 1px solid #e5e7eb;
    border-radius: 17px;
    background-color: #f9fafb;
    color: #9ca3af;
}

.global-search input {
    flex: 1;
}

.google-btn {
    gap: 4px;
    height: 22px;
    padding: 0 8px;
    border-radius: 11px;
    background-color: #3b82f6;
    color: #fff;
    font-size: 11px;
    font-weight: 500;
}

.topbar-right {
    display: flex;
    align-items: center;
    gap: 14px;
}

.rates {
    display: flex;
    align-items: center;
    height: 30px;
    border: 1px solid #e5e7eb;
    border-radius: 15px;
    background-color: #f9fafb;
    color: #4b5563;
    font-size: 11px;
    font-weight: 600;
}

.rate {
    display: flex;
    align-items: center;
    gap: 4px;
    height: 11px;
    padding: 0 14px;
}

.rate + .rate {
    border-left: 1px solid #d1d5db;
}

.rate b {
    font-size: 12px;
    font-weight: 600;
}

.usd { color: #16a34a; }
.eur { color: #2563eb; }
.gold { color: #f59e0b; }

.welcome {
    color: #374151;
}

.avatar {
    width: 28px;
    height: 28px;
    border-radius: 50%;
    background-color: #f3f4f6;
    color: #6b7280;
}

/* İçerik */
.content {
    flex: 1;
    display: flex;
    gap: 14px;
    padding: 14px 13px 10px 14px;
}

.panel {
    display: flex;
    flex-direction: column;
    overflow: hidden;
    border: 1px solid #e5e7eb;
    border-radius: 14px;
    background-color: #fff;
    box-shadow: 0 1px 2px rgba(0, 0, 0, 0.05);
}

.products {
    flex: 49;
}

.products-head {
    display: flex;
    align-items: center;
    gap: 6px;
    padding: 13px;
    border-bottom: 1px solid #f3f4f6;
}

.product-search {
    flex: 1;
    display: flex;
    align-items: center;
    gap: 13px;
    height: 52px;
    padding: 0 14px;
    border: 1px solid #38a9e8;
    border-radius: 11px;
    color: #9ca3af;
}

/* imleç sol kenarlıkla çizilir */
.product-search input {
    flex: 1;
    height: 18px;
    border-left: 1px solid #111827;
    color: #111827;
    caret-color: transparent;
    font-size: 14px;
}

.manual-btn {
    gap: 8px;
    height: 50px;
    padding: 0 15px 0 14px;
    border-radius: 10px;
    background-image: linear-gradient(to right, #f59e0b, #f97316);
    box-shadow: 0 3px 5px rgba(0, 0, 0, 0.12);
    color: #fff;
    font-size: 12px;
    font-weight: 600;
}

.empty {
    display: flex;
    flex-direction: column;
    align-items: center;
    gap: 17px;
    padding-top: 122px;
    color: #9ca3af;
    font-size: 16px;
    line-height: 24px;
}

.icon-barcode {
    opacity: 0.2;
}

/* Sepet */
.cart {
    flex: 24;
}

.cart-head {
    display: flex;
    align-items: center;
    justify-content: space-between;
    height: 57px;
    padding: 0 21px;
    background-color: #4f46e5;
    color: #fff;
}

.cart-head h1 {
    display: flex;
    align-items: center;
    gap: 7px;
    font-size: 16px;
    font-weight: 600;
}

.icon-basket {
    opacity: 0.8;
}

.cart-actions {
    display: flex;
    gap: 7px;
}

.cart-actions button {
    gap: 4px;
    height: 29px;
    padding: 0 10px;
    border-radius: 7px;
    background-color: rgba(255, 255, 255, 0.1);
}

.cart-list {
    flex: 1;
    padding: 12px 14px;
}

.cart-item {
    display: flex;
    align-items: center;
    padding: 11px 0;
}

.cart-item + .cart-item {
    border-top: 1px solid #f3f4f6;
}

.item-no {
    width: 21px;
    color: #9ca3af;
    font-size: 11px;
    font-weight: 600;
}

.item-info {
    flex: 1;
    display: flex;
    flex-direction: column;
}

.item-info h3 {
    display: flex;
    align-items: center;
    gap: 7px;
    font-size: 13px;
    font-weight: 500;
}

.badge {
    margin: 5px 0 3px;
    padding: 0 3px;
    border-radius: 3px;
    background-color: #ffedd5;
    color: #ea580c;
    font-size: 9px;
    line-height: 13px;
}

.sku {
    color: #9ca3af;
    font-size: 9px;
    line-height: 14px;
}

.price {
    display: flex;
    align-items: center;
    gap: 7px;
    color: #6b7280;
    font-size: 11px;
    line-height: 16px;
}

.item-qty {
    display: flex;
    align-items: center;
    margin-right: 14px;
}

.qty-btn {
    width: 22px;
    height: 22px;
    border: 1px solid #d1d5db;
    border-radius: 50%;
    color: #4b5563;
}

.qty {
    width: 35px;
    text-align: center;
    font-weight: 600;
}

/* Toplamlar */
.summary {
    padding: 21px 21px 22px;
    border-top: 1px solid #f3f4f6;
    background-color: #f9fafb;
}

.sum-row {
    display: flex;
    justify-content: space-between;
    color: #6b7280;
}

.sum-row strong {
    color: #111827;
    font-weight: 500;
}

.sum-row.minus {
    color: #ef4444;
}

.discount {
    margin: 7px 0 12px;
    padding: 11px 11px 10px;
    border: 1px solid #e5e7eb;
    border-radius: 10px;
    background-color: #fff;
}

.discount label {
    display: flex;
    align-items: center;
    gap: 6px;
    margin-bottom: 7px;
    color: #374151;
    font-weight: 500;
}

.discount label .icon {
    color: #ef4444;
}

.discount-row {
    display: flex;
    gap: 7px;
}

.discount-row input {
    flex: 1;
    height: 32px;
    padding: 0 28px 0 11px;
    border-radius: 7px;
    background-color: #f9fafb;
    color: #374151;
}

.discount-row input::-webkit-inner-spin-button {
    -webkit-appearance: none;
    width: 16px;
    height: 16px;
    opacity: 1;
    background: #e8e8eb url("data:image/svg+xml,%3Csvg xmlns='http://www.w3.org/2000/svg' viewBox='0 0 16 16' fill='none' stroke='%238b8b93'%3E%3Cpath d='M5 6l3-3 3 3M5 10l3 3 3-3'/%3E%3C/svg%3E");
}

.discount-type {
    display: flex;
    overflow: hidden;
    height: 36px;
    border: 1px solid #e5e7eb;
    border-radius: 7px;
    background-color: #f9fafb;
}

.discount-type button {
    width: 32px;
    color: #374151;
    font-weight: 500;
}

.discount-type .selected {
    width: 34px;
    background-color: #ef4444;
    color: #fff;
}

.discount-clear {
    width: 32px;
    height: 36px;
    border-radius: 7px;
    background-color: #f3f4f6;
    color: #6b7280;
}

.total {
    display: flex;
    justify-content: space-between;
    margin-top: 6px;
    padding-top: 13px;
    border-top: 1px solid #e5e7eb;
    font-size: 16px;
    font-weight: 700;
    line-height: 28px;
}

.total strong {
    color: #4f46e5;
    font-size: 21px;
    line-height: 32px;
}

.pay-actions {
    display: flex;
    gap: 7px;
    margin-top: 20px;
}

.pay-actions button {
    flex: 1;
    gap: 7px;
    height: 39px;
    border-radius: 10px;
    color: #fff;
    font-weight: 600;
}

.pay {
    background-image: linear-gradient(to right, #22c55e, #059669);
    box-shadow: 0 7px 12px rgba(34, 197, 94, 0.25);
}

.work-order {
    background-color: #f59e0b;
}
```
